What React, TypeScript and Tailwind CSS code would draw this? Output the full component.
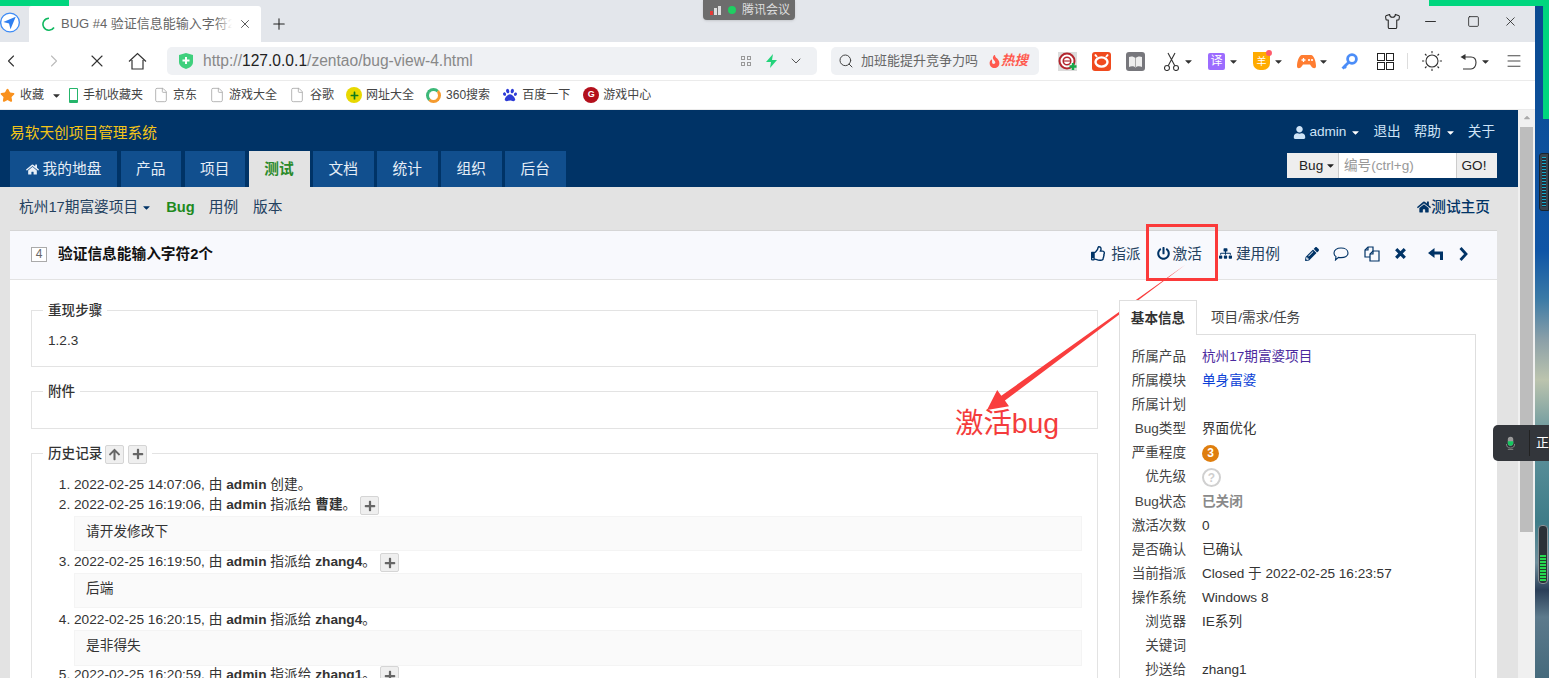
import {
  ChevronDown,
  ChevronLeft,
  ChevronRight,
  File,
  Menu,
  Minus,
  Plus,
  Search,
  Shirt,
  Square,
  Star,
  X,
} from "lucide-react";
import {
  FaArrowUp,
  FaCaretDown,
  FaFire,
  FaHome,
  FaPaw,
  FaPencilAlt,
  FaPlus,
  FaPowerOff,
  FaRegThumbsUp,
  FaSitemap,
  FaUser,
} from "react-icons/fa";
import { ReactNode } from "react";

const NAV = ["产品", "项目", "测试", "文档", "统计", "组织", "后台"];

const INFO: { label: string; value?: ReactNode }[] = [
  { label: "所属产品", value: <span className="text-[#4b2a9e]">杭州17期富婆项目</span> },
  { label: "所属模块", value: <span className="text-[#0b3fd6]">单身富婆</span> },
  { label: "所属计划" },
  { label: "Bug类型", value: "界面优化" },
  {
    label: "严重程度",
    value: (
      <span className="flex h-[17px] w-[17px] items-center justify-center rounded-full bg-[#df7e0e] text-[12px] font-bold text-white">
        3
      </span>
    ),
  },
  {
    label: "优先级",
    value: (
      <span className="flex h-[19px] w-[19px] items-center justify-center rounded-full border-2 border-[#d0d0d0] text-[12px] font-bold text-[#cfcfcf]">
        ?
      </span>
    ),
  },
  { label: "Bug状态", value: <span className="font-bold text-[#8a8a8a]">已关闭</span> },
  { label: "激活次数", value: "0" },
  { label: "是否确认", value: "已确认" },
  { label: "当前指派", value: "Closed 于 2022-02-25 16:23:57" },
  { label: "操作系统", value: "Windows 8" },
  { label: "浏览器", value: "IE系列" },
  { label: "关键词" },
  { label: "抄送给", value: "zhang1" },
];

function Caret({ className = "" }: { className?: string }) {
  return <FaCaretDown className={`shrink-0 text-[11px] ${className}`} />;
}

function Bookmark({
  icon,
  text,
  className,
  gap,
}: {
  icon: ReactNode;
  text: string;
  className: string;
  gap: string;
}) {
  return (
    <div className={`flex items-center ${className}`}>
      {icon}
      <span className={gap}>{text}</span>
    </div>
  );
}

function PageIcon() {
  return <File className="h-[16px] w-[16px] text-[#aaa]" strokeWidth={1.3} />;
}

function PlusButton({ className = "" }: { className?: string }) {
  return (
    <span
      className={`inline-flex h-[19px] w-[19px] items-center justify-center rounded-[2px] border border-[#d5d5d5] bg-[#efefef] text-[#666] ${className}`}
    >
      <FaPlus className="text-[12px]" />
    </span>
  );
}

function TabStrip() {
  return (
    <div className="flex h-[42px] bg-[#e3e6eb]">
      <svg className="mt-[12px] ml-[-1px] h-[21px] w-[22px]" viewBox="0 0 22 22">
        <circle cx="11" cy="11" r="9.8" fill="#fff" stroke="#3e8bf5" strokeWidth="1.4" />
        <path d="M17 5 L4 10.5 L10 12 L11.5 18 Z" fill="#2f7ff0" />
      </svg>
      <div className="mt-[6px] ml-[8px] flex h-[36px] w-[232px] items-center rounded-t-[3px] bg-white pl-[12px]">
        <svg className="h-[14px] w-[14px]" viewBox="0 0 14 14">
          <path d="M8 1.2 A6 6 0 1 0 13 10.5" fill="none" stroke="#10b860" strokeWidth="1.6" />
        </svg>
        <div className="relative ml-[6px] w-[171px] overflow-hidden text-[13px] whitespace-nowrap text-[#666]">
          BUG #4 验证信息能输入字符2个
          <div className="absolute inset-y-0 right-0 w-[16px] bg-gradient-to-r from-transparent to-white" />
        </div>
        <X className="ml-[6px] h-[14px] w-[14px] text-[#444]" strokeWidth={1.5} />
      </div>
      <Plus className="mt-[15px] ml-[9px] h-[18px] w-[18px] text-[#222]" strokeWidth={1.4} />
      <div className="ml-auto flex items-center pr-[17px] text-[#222]">
        <Shirt className="h-[17px] w-[17px]" strokeWidth={1.5} />
        <Minus className="ml-[21px] h-[17px] w-[17px]" strokeWidth={1.3} />
        <Square className="ml-[28px] h-[13px] w-[13px]" strokeWidth={1.5} />
        <X className="ml-[23px] h-[15px] w-[15px]" strokeWidth={1.3} />
      </div>
    </div>
  );
}

function AddonIcons() {
  return (
    <>
      <svg className="ml-[19px] h-[19px] w-[19px]" viewBox="0 0 19 19">
        <rect width="19" height="19" fill="#dcdcdc" />
        <circle cx="9" cy="9" r="7.5" fill="#fff" stroke="#b3262e" strokeWidth="2" />
        <circle cx="9" cy="9" r="3.8" fill="none" stroke="#b3262e" strokeWidth="1.5" />
        <path d="M5.5 9 H12.5" stroke="#b3262e" strokeWidth="1.2" />
        <path d="M15 11 V18 M11.5 14.5 H18.5" stroke="#18a84b" strokeWidth="2.4" />
      </svg>
      <svg className="ml-[15px] h-[19px] w-[19px]" viewBox="0 0 19 19">
        <rect width="19" height="19" rx="3" fill="#f04a1e" />
        <ellipse cx="9.5" cy="10" rx="6" ry="4.6" fill="none" stroke="#fff" strokeWidth="2.4" />
        <path d="M5 5 L3 2.5 M14 5 L16 2.5" stroke="#fff" strokeWidth="2" />
      </svg>
      <svg className="ml-[15px] h-[19px] w-[19px]" viewBox="0 0 19 19">
        <rect width="19" height="19" rx="3" fill="#77777c" />
        <path d="M3 5 C5 4 8 4.5 9.5 6 C11 4.5 14 4 16 5 V15 C14 14 11 14 9.5 15.5 C8 14 5 14 3 15 Z" fill="#eee" />
        <path d="M9.5 6 V15.5" stroke="#aaa" strokeWidth="1" />
      </svg>
      <svg className="ml-[19px] h-[19px] w-[15px]" viewBox="0 0 15 19" fill="none" stroke="#333" strokeWidth="1.1">
        <circle cx="3" cy="16" r="2.5" />
        <circle cx="12" cy="16" r="2.5" />
        <path d="M4.2 13.8 L11 1 M10.8 13.8 L4 1" />
      </svg>
      <Caret className="ml-[4px] text-[#333]" />
      <div className="ml-[14px] flex h-[17px] w-[17px] items-center justify-center rounded-[2px] bg-[#9c6cff] text-[12px] text-white">
        译
      </div>
      <Caret className="ml-[3px] text-[#333]" />
      <div className="relative ml-[14px] flex h-[18px] w-[17px] items-center justify-center rounded-b-[7px] bg-[#ffab00] text-[10px] text-white">
        羊
        <span className="absolute -top-[2px] -right-[2px] h-[6px] w-[6px] rounded-full bg-[#ff5a6a]" />
      </div>
      <Caret className="ml-[3px] text-[#333]" />
      <svg className="ml-[13px] h-[15px] w-[19px]" viewBox="0 0 19 15">
        <path d="M5 1 H14 C17 1 19 8 19 12 C19 15 16 15 14 12 L13 10.5 H6 L5 12 C3 15 0 15 0 12 C0 8 2 1 5 1 Z" fill="#ff7d31" />
        <path d="M4.5 6 H8.5 M6.5 4 V8" stroke="#fff" strokeWidth="1.3" />
        <circle cx="12" cy="6" r="1.1" fill="#fff" />
        <circle cx="15" cy="6" r="1.1" fill="#fff" />
      </svg>
      <Caret className="ml-[2px] text-[#333]" />
      <svg className="ml-[12px] h-[17px] w-[17px]" viewBox="0 0 17 17" fill="none" stroke="#4b8df8" strokeWidth="2.8">
        <circle cx="11" cy="6" r="4.4" />
        <path d="M7.5 9.5 L1.5 15.5 M2.5 12.5 L5 15" />
      </svg>
      <div className="ml-[19px] grid grid-cols-2 gap-[1px]">
        <span className="h-[8px] w-[8px] border border-[#222]" />
        <span className="h-[8px] w-[8px] border border-[#222]" />
        <span className="h-[8px] w-[8px] border border-[#222]" />
        <span className="h-[8px] w-[8px] border border-[#222]" />
      </div>
      <div className="ml-[13px] h-[16px] w-px bg-[#ddd]" />
      <svg className="ml-[14px] h-[20px] w-[20px]" viewBox="0 0 20 20" fill="none" stroke="#333" strokeWidth="1.1">
        <circle cx="10" cy="10" r="6" />
        <path d="M10 0 V2.2 M10 17.8 V20 M0 10 H2.2 M17.8 10 H20 M3 3 L4.5 4.5 M15.5 15.5 L17 17 M17 3 L15.5 4.5 M4.5 15.5 L3 17" />
      </svg>
      <svg className="ml-[18px] h-[17px] w-[17px]" viewBox="0 0 17 17" fill="none" stroke="#333" strokeWidth="1.1">
        <path d="M5 4 H11 C14 4 16 6 16 9.5 C16 13 14 16 11 16 H3" />
        <path d="M0.5 4 L5.5 1 V7 Z" fill="#333" stroke="none" />
      </svg>
      <Caret className="ml-[3px] text-[#333]" />
      <Menu className="ml-[14px] h-[18px] w-[18px] text-[#333]" strokeWidth={1.2} />
    </>
  );
}

function Toolbar() {
  return (
    <div className="flex h-[39px] items-center border-b border-[#ebebeb] bg-white text-[#333]">
      <ChevronLeft className="ml-[1px] h-[20px] w-[20px]" strokeWidth={1.3} />
      <ChevronRight className="ml-[23px] h-[20px] w-[20px] text-[#bbb]" strokeWidth={1.3} />
      <X className="ml-[23px] h-[20px] w-[20px]" strokeWidth={1.3} />
      <svg className="ml-[21px] h-[19px] w-[19px]" viewBox="0 0 19 19" fill="none" stroke="#333" strokeWidth="1.2">
        <path d="M1 9.5 L9.5 1.5 L18 9.5 M4 8 V17 H15 V8" />
      </svg>
      <div className="ml-[20px] flex h-[28px] w-[650px] shrink-0 items-center rounded-[5px] bg-[#eff1f4] pr-[13px] pl-[12px]">
        <svg className="h-[16px] w-[14px]" viewBox="0 0 14 16">
          <path d="M7 0 L14 2 V9 C14 13 10 15 7 16 C4 15 0 13 0 9 V2 Z" fill="#3fd07d" />
          <path d="M7 4 V11 M3.5 7.5 H10.5" stroke="#fff" strokeWidth="2" />
        </svg>
        <span className="ml-[10px] text-[15.6px] text-[#888]">
          http://<span className="text-[#222]">127.0.0.1</span>/zentao/bug-view-4.html
        </span>
        <div className="ml-auto grid grid-cols-2 gap-[2px]">
          <span className="h-[4px] w-[4px] border border-[#999]" />
          <span className="h-[4px] w-[4px] border border-[#999]" />
          <span className="h-[4px] w-[4px] border border-[#999]" />
          <span className="h-[4px] w-[4px] border border-[#999]" />
        </div>
        <svg className="ml-[15px] h-[14px] w-[11px]" viewBox="0 0 11 14">
          <path d="M7 0 L0 8 H5 L4 14 L11 6 H6 Z" fill="#22d37a" />
        </svg>
        <ChevronDown className="ml-[11px] h-[16px] w-[16px] text-[#555]" strokeWidth={1.5} />
      </div>
      <div className="ml-[14px] flex h-[28px] w-[208px] shrink-0 items-center rounded-[5px] bg-[#eff1f4] pl-[7px]">
        <Search className="h-[16px] w-[16px] text-[#444]" strokeWidth={1.5} />
        <span className="ml-[7px] text-[13px] text-[#666]">加班能提升竞争力吗</span>
        <FaFire className="ml-[10px] text-[13px] text-[#ff5a4f]" />
        <span className="text-[13.5px] font-bold text-[#ff5a4f] italic">热搜</span>
      </div>
      <AddonIcons />
    </div>
  );
}

function Bookmarks() {
  return (
    <div className="flex h-[29px] items-center border-b border-[#ebebeb] bg-white text-[12px] text-[#444]">
      <Bookmark
        className="ml-[0px]"
        gap="ml-[5px]"
        icon={<Star className="h-[15px] w-[15px] fill-[#f9911e] text-[#f9911e]" />}
        text="收藏"
      />
      <Caret className="ml-[7px] text-[#333]" />
      <Bookmark
        className="ml-[7px]"
        gap="ml-[5px]"
        icon={<span className="h-[15px] w-[9px] rounded-[1px] border border-b-[3px] border-[#25b56b]" />}
        text="手机收藏夹"
      />
      <Bookmark className="ml-[10px]" gap="ml-[4px]" icon={<PageIcon />} text="京东" />
      <Bookmark className="ml-[12px]" gap="ml-[4px]" icon={<PageIcon />} text="游戏大全" />
      <Bookmark className="ml-[12px]" gap="ml-[5px]" icon={<PageIcon />} text="谷歌" />
      <Bookmark
        className="ml-[12px]"
        gap="ml-[4px]"
        icon={
          <span className="flex h-[16px] w-[16px] items-center justify-center rounded-full bg-[#e8d800] text-[#0d7a1d]">
            <FaPlus className="text-[9px]" />
          </span>
        }
        text="网址大全"
      />
      <Bookmark
        className="ml-[12px]"
        gap="ml-[5px]"
        icon={<span className="h-[15px] w-[15px] rounded-full border-[3px] border-[#3cb878] border-r-[#f59b2f] border-b-[#f59b2f]" />}
        text="360搜索"
      />
      <Bookmark
        className="ml-[13px]"
        gap="ml-[5px]"
        icon={<FaPaw className="text-[14px] text-[#2e3cd6]" />}
        text="百度一下"
      />
      <Bookmark
        className="ml-[13px]"
        gap="ml-[4px]"
        icon={
          <span className="flex h-[16px] w-[16px] items-center justify-center rounded-full bg-[#b3101c] text-[9px] font-bold text-white">
            G
          </span>
        }
        text="游戏中心"
      />
    </div>
  );
}

function Header() {
  return (
    <div className="flex h-[77px] justify-between bg-[#003366] px-[10px]">
      <div className="flex flex-col justify-between">
        <div className="mt-[12px] text-[14.7px] text-[#f5c518]">易软天创项目管理系统</div>
        <div className="flex gap-[3.5px] text-[14.7px] text-[#e6eef7]">
          <div className="flex h-[36px] w-[107px] items-center justify-center bg-[#114f8e]">
            <FaHome className="mr-[4px] text-[13px]" />
            我的地盘
          </div>
          {NAV.map((name) =>
            name === "测试" ? (
              <div key={name} className="flex h-[36px] w-[61px] items-center justify-center bg-[#e3e3e3] font-bold text-[#2a8a2a]">
                {name}
              </div>
            ) : (
              <div key={name} className="flex h-[36px] w-[60.5px] items-center justify-center bg-[#114f8e]">
                {name}
              </div>
            ),
          )}
        </div>
      </div>
      <div className="mr-[11px] flex flex-col items-end">
        <div className="mt-[12px] mr-[2px] flex items-center text-[13.6px] text-[#cfe4f7]">
          <FaUser className="mr-[3px] text-[13px]" />
          admin
          <Caret className="ml-[4px] text-white" />
          <span className="ml-[12px]">退出</span>
          <span className="ml-[13px]">帮助</span>
          <Caret className="ml-[4px] text-white" />
          <span className="ml-[12px]">关于</span>
        </div>
        <div className="mt-[11px] flex h-[25px] w-[210px] text-[13.6px]">
          <div className="flex w-[52px] items-center border-r border-[#ccc] bg-[#eeeeee] pl-[12px] text-[#222]">
            Bug
            <Caret className="ml-[2px]" />
          </div>
          <div className="flex w-[117px] items-center bg-white pl-[5px] text-[#999]">编号(ctrl+g)</div>
          <div className="flex w-[41px] items-center justify-center border-l border-[#ccc] bg-[#eeeeee] pr-[6px] text-[#222]">GO!</div>
        </div>
      </div>
    </div>
  );
}

function SubNav() {
  return (
    <div className="flex h-[43px] items-center justify-between bg-[#e3e3e3] pr-[28px] pb-[2px] pl-[19px] text-[14.7px] text-[#23415f]">
      <div className="flex items-center">
        杭州17期富婆项目
        <Caret className="ml-[3px] text-[#003366]" />
        <span className="ml-[14px] font-bold text-[#1e8a1e]">Bug</span>
        <span className="ml-[14px]">用例</span>
        <span className="ml-[15px]">版本</span>
      </div>
      <div className="flex items-center font-medium text-[#003366]">
        <FaHome className="text-[14px]" />
        测试主页
      </div>
    </div>
  );
}

function TitleBar() {
  return (
    <div className="flex h-[49px] items-center border-b border-[#e3e3e3] bg-[#f8f9fd] pr-[29px] pb-[2px] pl-[21px] text-[14.7px]">
      <span className="flex h-[15px] w-[16px] items-center justify-center border border-[#aaa] bg-white text-[12px] text-[#666]">4</span>
      <span className="ml-[11px] font-bold text-[#111]">验证信息能输入字符2个</span>
      <div className="ml-auto flex items-center text-[#23415f]">
        <FaRegThumbsUp className="text-[15px] text-[#003366]" />
        <span className="ml-[5px]">指派</span>
        <FaPowerOff className="ml-[16px] text-[13px] text-[#003366]" />
        <span className="ml-[3px]">激活</span>
        <FaSitemap className="ml-[17px] text-[13px] text-[#003366]" />
        <span className="ml-[4px]">建用例</span>
        <FaPencilAlt className="ml-[25px] text-[14px] text-[#003366]" />
        <svg className="ml-[14px] h-[14px] w-[16px]" viewBox="0 0 16 14" fill="none" stroke="#003366" strokeWidth="1.1">
          <path d="M8 1 C12 1 15 3 15 6 C15 9 12 10.6 8 10.6 C7 10.6 6 10.5 5.5 10.4 L2.5 13 L3 9.6 C1.8 8.8 1 7.5 1 6 C1 3 4 1 8 1 Z" />
        </svg>
        <svg className="ml-[15px] h-[16px] w-[16px]" viewBox="0 0 16 16" fill="none" stroke="#003366" strokeWidth="1.2">
          <path d="M6 11 H1 V4 L4 1 H9 V5" />
          <path d="M9 5 H15 V15 H6 V8 Z" fill="#f8f9fd" />
          <path d="M4 1 V4 H1 M9 5 V8 H6" />
        </svg>
        <svg className="ml-[15px] h-[11px] w-[11px]" viewBox="0 0 11 11" stroke="#003366" strokeWidth="3.2">
          <path d="M1.2 1.2 L9.8 9.8 M9.8 1.2 L1.2 9.8" />
        </svg>
        <svg className="ml-[22px] h-[12px] w-[15px]" viewBox="0 0 15 12" fill="#003366">
          <path d="M0 5 L6.5 0 V3.4 H15 V12 H12 V6.4 H6.5 V10 Z" />
        </svg>
        <svg className="ml-[16px] h-[14px] w-[9px]" viewBox="0 0 9 14" fill="none" stroke="#003366" strokeWidth="2.8">
          <path d="M1.5 1 L7 7 L1.5 13" />
        </svg>
      </div>
    </div>
  );
}

function History() {
  return (
    <ol className="mr-[15px] ml-[42px] list-decimal pt-[11px] text-[13.7px] leading-[21px] text-[#333]">
      <li className="leading-[19px]">
        2022-02-25 14:07:06, 由 <b>admin</b> 创建。
      </li>
      <li>
        2022-02-25 16:19:06, 由 <b>admin</b> 指派给 <b>曹建</b>。
        <PlusButton className="ml-[4px] align-middle" />
        <div className="mt-[1px] h-[35px] border border-[#f4f4f4] bg-[#fafafa] pl-[11px] leading-[29px]">请开发修改下</div>
      </li>
      <li>
        2022-02-25 16:19:50, 由 <b>admin</b> 指派给 <b>zhang4</b>。
        <PlusButton className="ml-[4px] align-middle" />
        <div className="mt-[1px] h-[35px] border border-[#f4f4f4] bg-[#fafafa] pl-[11px] leading-[29px]">后端</div>
      </li>
      <li className="mt-[1px]">
        2022-02-25 16:20:15, 由 <b>admin</b> 指派给 <b>zhang4</b>。
        <div className="h-[36px] border border-[#f4f4f4] bg-[#fafafa] pl-[11px] leading-[29px]">是非得失</div>
      </li>
      <li className="mt-[-2px]">
        2022-02-25 16:20:59, 由 <b>admin</b> 指派给 <b>zhang1</b>。
        <PlusButton className="ml-[4px] align-middle" />
      </li>
    </ol>
  );
}

function Main() {
  return (
    <div className="flex w-[1067px] flex-col gap-[13px]">
      <fieldset className="h-[68px] border border-[#e3e3e3] px-[16px]">
        <legend className="ml-[-5px] px-[5px] pt-[2px] font-medium text-[#333]">重现步骤</legend>
        <div className="mt-[10px]">1.2.3</div>
      </fieldset>
      <fieldset className="h-[49px] border border-[#e3e3e3] px-[16px]">
        <legend className="ml-[-5px] px-[5px] pt-[2px] font-medium text-[#333]">附件</legend>
      </fieldset>
      <fieldset className="border border-[#e3e3e3] pb-[60px]">
        <legend className="ml-[11px] flex items-center px-[5px] pt-[2px] font-medium text-[#333]">
          历史记录
          <span className="ml-[3px] inline-flex h-[19px] w-[19px] items-center justify-center rounded-[2px] border border-[#d5d5d5] bg-[#efefef] text-[#666]">
            <FaArrowUp className="text-[13px]" />
          </span>
          <PlusButton className="ml-[4px]" />
        </legend>
        <History />
      </fieldset>
    </div>
  );
}

function Side() {
  return (
    <div className="mt-[1px] ml-[21px] w-[357px] text-[13.6px] text-[#333]">
      <div className="flex h-[35px] items-center">
        <div className="z-10 flex h-[35px] w-[78px] items-center justify-center border border-b-0 border-[#dedede] bg-white pt-[2px] font-bold">基本信息</div>
        <div className="ml-[14px] pt-[2px] text-[#444]">项目/需求/任务</div>
      </div>
      <div className="mt-[-1px] border border-[#dedede] pt-[10px] pb-[30px]">
        {INFO.map((row) => (
          <div key={row.label} className={row.label === "优先级" ? "flex h-[25px] items-center" : "flex h-[24px] items-center"}>
            <div className="w-[66px] text-right text-[#444]">{row.label}</div>
            <div className="ml-[16px]">{row.value}</div>
          </div>
        ))}
      </div>
    </div>
  );
}

export default function App() {
  return (
    <div className="relative flex h-[678px] w-[1549px] overflow-hidden bg-white font-['Liberation_Sans','Noto_Sans_CJK_SC',sans-serif] text-[13.6px] text-[#333]">
      <div className="w-[1535px]">
        <TabStrip />
        <Toolbar />
        <Bookmarks />
        <div className="flex h-[568px]">
          <div className="w-[1518px]">
            <Header />
            <SubNav />
            <div className="h-[448px] overflow-hidden bg-[#e3e3e3] pr-[21px] pl-[10px]">
              <div className="h-full border-t border-[#d5d5d5] bg-white">
                <TitleBar />
                <div className="flex pt-[19px] pl-[21px]">
                  <Main />
                  <Side />
                </div>
              </div>
            </div>
          </div>
          <div className="flex w-[17px] flex-col items-center bg-[#f0f0f0]">
            <FaCaretDown className="mt-[3px] rotate-180 text-[10px] text-[#aaa]" />
            <div className="mt-[4px] h-[405px] w-[13px] bg-[#bdbdbd]" />
          </div>
        </div>
      </div>
      <div className="w-[14px] bg-[linear-gradient(180deg,#0a4a90_0%,#0f55a6_37%,#3a7aa6_44%,#8a9fa8_50%,#bcc4ae_56%,#5f929c_65%,#3e7c88_77%,#6f8f9c_83%,#2b3f58_87%,#5d7a8c_91%,#456a7c_100%)]" />

      {/* things on top of the page */}
      <div className="absolute top-0 left-0 h-[6px] w-[69px] bg-[#00d67e]" />
      <div className="absolute top-0 left-[1429px] h-[6px] w-[120px] bg-[#00d67e]" />
      <div className="absolute top-[6px] left-[1543px] h-[113px] w-[6px] bg-[#00d67e]" />

      <div className="absolute top-0 left-[703px] flex h-[20px] w-[92px] items-center rounded-b-[4px] bg-[#6d6d6d] pl-[7px] text-[12px] text-[#ddd] shadow">
        <div className="flex h-[9px] items-end gap-[1px]">
          <span className="h-[4px] w-[3px] bg-[#e53935]" />
          <span className="h-[7px] w-[3px] bg-[#ddd]" />
          <span className="h-[9px] w-[3px] bg-[#ddd]" />
        </div>
        <span className="ml-[7px] h-[8px] w-[8px] rounded-full bg-[#1fce62]" />
        <span className="ml-[6px]">腾讯会议</span>
      </div>

      <div className="absolute top-[224px] left-[1146px] h-[57px] w-[72px] border-[3px] border-[#fb3a3a]" />

      <svg className="absolute top-[260px] left-[980px] h-[155px] w-[210px]" viewBox="980 260 210 155">
        <polygon points="1185,265 1004.9,400.6 1009,406.3 987,410 997.2,390.1 1001.3,395.8" fill="#f93e3e" />
      </svg>

      <div className="absolute top-[403px] left-[955px] text-[28.4px] leading-[40px] text-[#f43c3c]">激活bug</div>

      <div className="absolute top-[425px] left-[1493px] flex h-[36px] w-[56px] items-center overflow-hidden rounded-l-[5px] bg-[#33363b] pl-[13px] text-[13px] text-white">
        <svg className="h-[15px] w-[10px]" viewBox="0 0 10 15">
          <rect x="2" y="0" width="6" height="10" rx="3" fill="#9a9a9a" />
          <path d="M2 5 H8 V7 A3 3 0 0 1 2 7 Z" fill="#14c860" />
          <path d="M0.5 8 A4.5 4.5 0 0 0 9.5 8 M2 14 H8" fill="none" stroke="#8a8a8a" strokeWidth="1" />
        </svg>
        <span className="ml-[14px] h-[26px] w-px bg-[#222]" />
        <span className="ml-[6px]">正</span>
      </div>

      <div className="absolute top-[153px] left-[1539px] flex h-[58px] w-[10px] justify-center rounded-l-[3px] border border-[#1a232c] bg-[#39444e] py-[3px]">
        <div className="h-full w-[4px] bg-[repeating-linear-gradient(180deg,#18a8c8_0px,#18a8c8_1px,#222c36_1px,#222c36_3px)]" />
      </div>
      <div className="absolute top-[525px] left-[1538px] flex h-[59px] w-[10px] items-end justify-center rounded-[4px] border border-[#8a9196] bg-[#2a3238] pb-[2px]">
        <div className="h-[26px] w-[6px] bg-[repeating-linear-gradient(180deg,#27d950_0px,#27d950_2px,#20402a_2px,#20402a_3px)]" />
      </div>
    </div>
  );
}
